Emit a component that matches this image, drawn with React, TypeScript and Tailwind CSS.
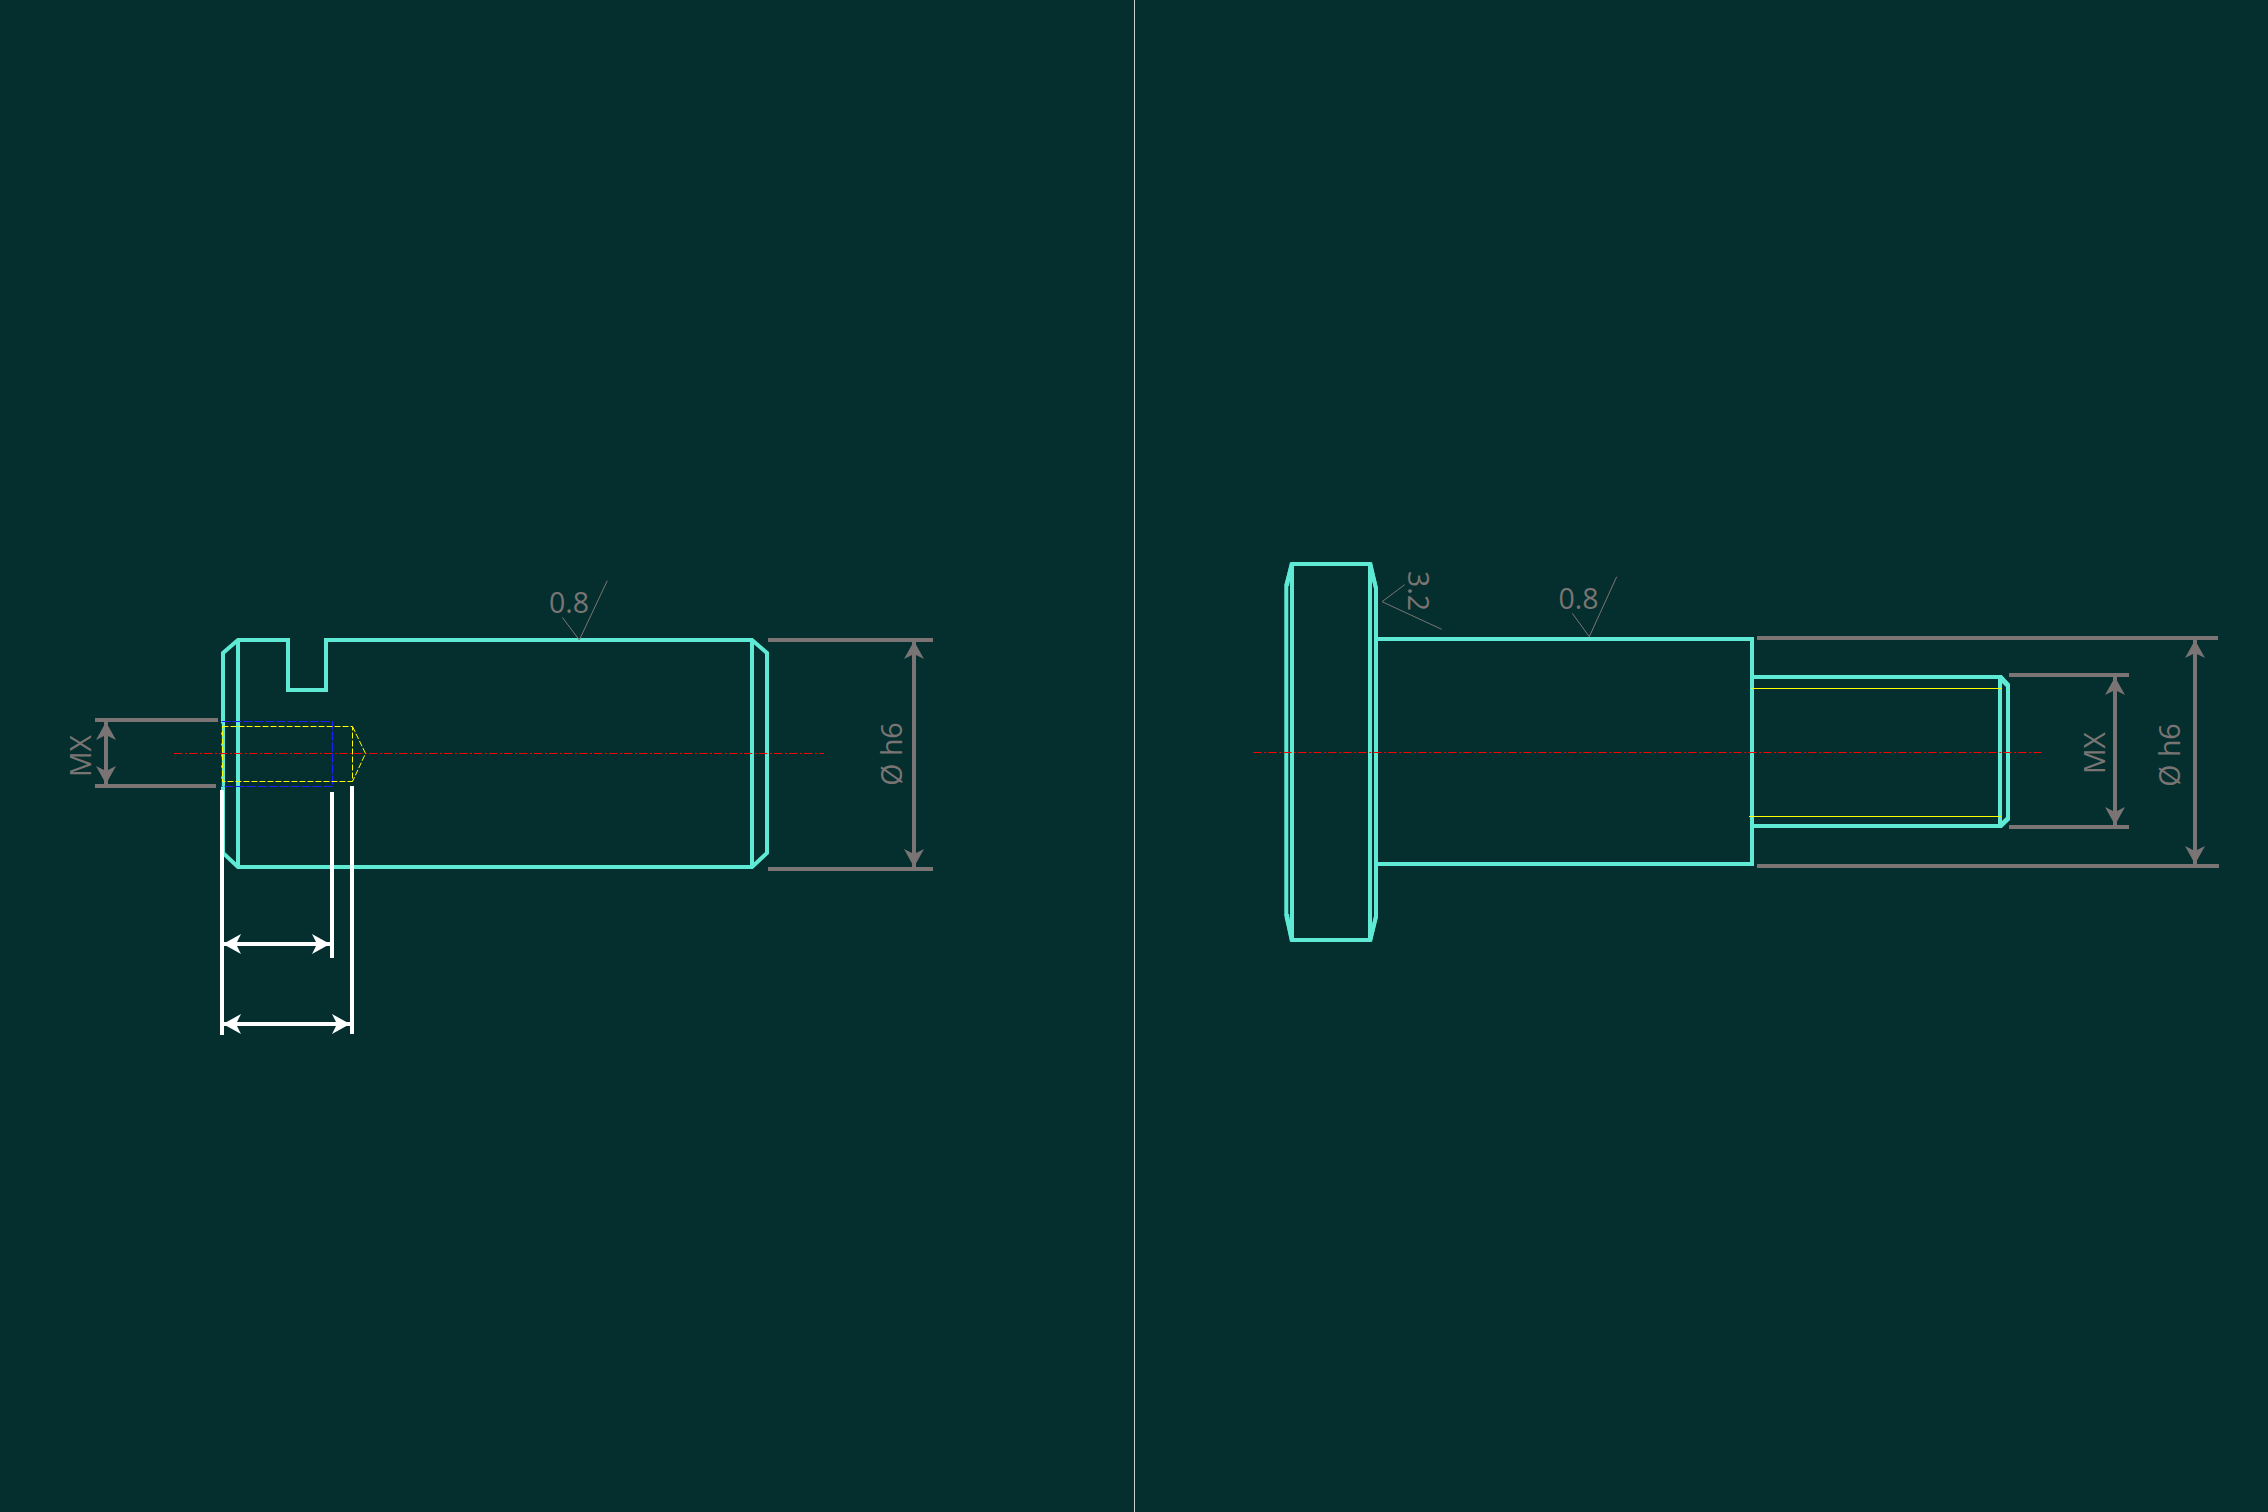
const GREY = "#7a7574";
const TEAL = "#5eead4";
const RED = "#ff0000";
const FONT = '"Open Sans", sans-serif';
const AXIS = "8.3 2.7 2 2";

function Arrow({ x1, y1, x2, y2, color }: { x1: number; y1: number; x2: number; y2: number; color: string }) {
  // shaft plus two barbed heads, tips sit on the given points
  const len = Math.hypot(x2 - x1, y2 - y1);
  const ux = (x2 - x1) / len;
  const uy = (y2 - y1) / len;
  const head = (tx: number, ty: number, d: number) => {
    const bx = tx + ux * 18 * d;
    const by = ty + uy * 18 * d;
    const nx = tx + ux * 13 * d;
    const ny = ty + uy * 13 * d;
    return `${tx},${ty} ${bx - uy * 10},${by + ux * 10} ${nx},${ny} ${bx + uy * 10},${by - ux * 10}`;
  };
  return (
    <g fill={color}>
      <line x1={x1} y1={y1} x2={x2} y2={y2} stroke={color} strokeWidth={4} />
      <polygon points={head(x1, y1, 1)} />
      <polygon points={head(x2, y2, -1)} />
    </g>
  );
}

function Ext({ x1, x2, y }: { x1: number; x2: number; y: number }) {
  return <line x1={x1} y1={y} x2={x2} y2={y} stroke={GREY} strokeWidth={4} />;
}

function Label({ x, y, rot, children }: { x: number; y: number; rot?: number; children: string }) {
  return (
    <text
      x={x}
      y={y}
      transform={rot ? `rotate(${rot} ${x} ${y})` : undefined}
      fill={GREY}
      fontSize={28.5}
      textAnchor="middle"
      style={{ fontFamily: FONT }}
    >
      {children}
    </text>
  );
}

function Finish({ points }: { points: string }) {
  return <polyline points={points} fill="none" stroke={GREY} strokeWidth={1} />;
}

function SlottedPin() {
  return (
    <svg viewBox="0 0 1134 1512" className="block h-full w-full">
      <g fill="none" stroke={TEAL} strokeWidth={4}>
        <polyline points="290,640 238,640 223,653 223,853 238,867 752,867 767,853 767,653 752,640 326,640 326,690 288,690 288,638" />
        <line x1={238} y1={640} x2={238} y2={867} />
        <line x1={752} y1={640} x2={752} y2={867} />
      </g>
      <line x1={174} y1={753.5} x2={824} y2={753.5} stroke={RED} strokeWidth={1} strokeDasharray={AXIS} />
      <rect x={221.5} y={721.5} width={111} height={65} fill="none" stroke="#2020ff" strokeWidth={1} strokeDasharray="9 2" />
      <g fill="none" stroke="#ffff00" strokeWidth={1} strokeDasharray="6 2">
        <rect x={222.5} y={726.5} width={130} height={55} />
        <polyline points="352.5,726.5 365.5,753.5 352.5,781.5" />
      </g>
      <Ext x1={95} x2={218} y={720} />
      <Ext x1={95} x2={216} y={786} />
      <Arrow x1={106} y1={722} x2={106} y2={784} color={GREY} />
      <Label x={90.5} y={756} rot={-90}>MX</Label>
      <Ext x1={768} x2={933} y={640} />
      <Ext x1={768} x2={933} y={869} />
      <Arrow x1={914} y1={641} x2={914} y2={867} color={GREY} />
      <Label x={901.5} y={754} rot={-90}>Ø h6</Label>
      <Label x={569} y={613}>0.8</Label>
      <Finish points="562.3,617.3 579.3,640 607.3,580.7" />
      <g stroke="#ffffff" strokeWidth={4}>
        <line x1={222} y1={790} x2={222} y2={1035} />
        <line x1={332} y1={792} x2={332} y2={958} />
        <line x1={352} y1={786} x2={352} y2={1034} />
      </g>
      <Arrow x1={223} y1={944} x2={330} y2={944} color="#ffffff" />
      <Arrow x1={223} y1={1024} x2={350} y2={1024} color="#ffffff" />
    </svg>
  );
}

function ThreadedPin() {
  return (
    <svg viewBox="1135 0 1133 1512" className="block h-full w-full">
      <g fill="none" stroke={TEAL} strokeWidth={4}>
        <polyline points="1286.3,916 1286.3,585 1292,564 1370,564 1376,588 1376,917 1370,940 1292,940 1286.3,916" />
        <line x1={1292} y1={564} x2={1292} y2={940} />
        <line x1={1370} y1={564} x2={1370} y2={940} />
        <polyline points="1376,639 1752,639 1752,864 1376,864" />
        <polyline points="1752,677 2001,677 2008,685 2008,819 2001,826 1752,826" />
        <line x1={2000} y1={675} x2={2000} y2={828} />
      </g>
      {/* chamfer wedges read heavier than the plain outline */}
      <g fill={TEAL}>
        <polygon points="1284.5,586 1289,586 1293,566 1290,562" />
        <polygon points="1372,562 1369,566 1374,589 1378,589" />
        <polygon points="1284.5,914 1289,914 1293,938 1290,942" />
        <polygon points="1372,942 1369,938 1374,916 1378,916" />
        <polygon points="2001,675 2010,684 2006,687 2001,682" />
        <polygon points="2001,828 2010,820 2006,817 2001,822" />
      </g>
      <line x1={1253.3} y1={752.5} x2={2042} y2={752.5} stroke={RED} strokeWidth={1} strokeDasharray={AXIS} />
      <line x1={1751} y1={688.5} x2={2002} y2={688.5} stroke="#ffff00" strokeWidth={1} />
      <line x1={1749} y1={816.5} x2={2001} y2={816.5} stroke="#ffff00" strokeWidth={1} />
      <Ext x1={1757} x2={2218} y={638} />
      <Ext x1={1757} x2={2219} y={866} />
      <Arrow x1={2195} y1={640} x2={2195} y2={864} color={GREY} />
      <Label x={2180} y={755} rot={-90}>Ø h6</Label>
      <Ext x1={2009} x2={2129} y={675} />
      <Ext x1={2009} x2={2129} y={827} />
      <Arrow x1={2115} y1={677} x2={2115} y2={825} color={GREY} />
      <Label x={2105} y={753} rot={-90}>MX</Label>
      <Label x={1578.5} y={608.5}>0.8</Label>
      <Finish points="1572.3,613.3 1589.3,636.7 1616.7,576.7" />
      <Label x={1407.7} y={591} rot={90}>3.2</Label>
      <Finish points="1404.7,584.7 1382,601.7 1441.7,629.3" />
    </svg>
  );
}

export default function App() {
  return (
    <div className="flex h-[1512px] w-[2268px] overflow-hidden bg-[#042f2e]">
      <div className="h-full w-[1134px]">
        <SlottedPin />
      </div>
      <div className="h-full w-px bg-[#c8cccc]" />
      <div className="h-full w-[1133px]">
        <ThreadedPin />
      </div>
    </div>
  );
}
